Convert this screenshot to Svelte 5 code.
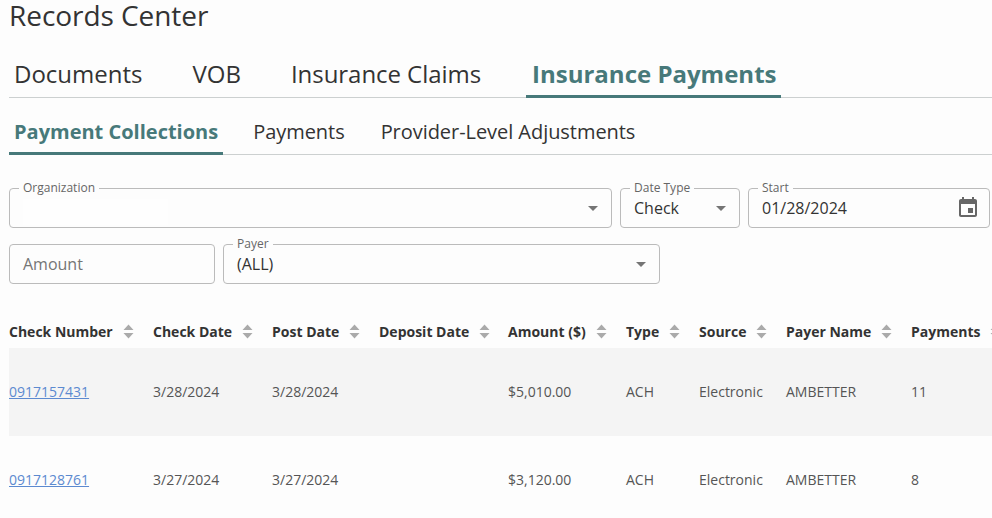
<script>
  const columns = [
    { label: 'Check Number', width: 144 },
    { label: 'Check Date', width: 119 },
    { label: 'Post Date', width: 107 },
    { label: 'Deposit Date', width: 129 },
    { label: 'Amount ($)', width: 118 },
    { label: 'Type', width: 73 },
    { label: 'Source', width: 87 },
    { label: 'Payer Name', width: 125 },
    { label: 'Payments', width: 100 }
  ];
  const rows = [
    ['0917157431', '3/28/2024', '3/28/2024', '', '$5,010.00', 'ACH', 'Electronic', 'AMBETTER', '11'],
    ['0917128761', '3/27/2024', '3/27/2024', '', '$3,120.00', 'ACH', 'Electronic', 'AMBETTER', '8']
  ];
  const template = columns.map((c) => c.width + 'px').join(' ');
</script>

<div class="page">
  <h1>Records Center</h1>

  <nav class="tabs main">
    <span class="tab t-doc">Documents</span>
    <span class="tab t-vob">VOB</span>
    <span class="tab t-claims">Insurance Claims</span>
    <span class="tab active t-pay">Insurance Payments</span>
  </nav>

  <nav class="tabs sub">
    <span class="tab active s-coll">Payment Collections</span>
    <span class="tab s-pay">Payments</span>
    <span class="tab s-adj">Provider-Level Adjustments</span>
  </nav>

  <div class="filters">
    <div class="row">
      <div class="field org">
        <span class="legend">Organization</span>
        <span class="redacted"></span>
        <svg class="arrow" viewBox="0 0 24 24"><path d="M7 10l5 5 5-5z" /></svg>
      </div>
      <div class="field datetype">
        <span class="legend">Date Type</span>
        <span class="value">Check</span>
        <svg class="arrow" viewBox="0 0 24 24"><path d="M7 10l5 5 5-5z" /></svg>
      </div>
      <div class="field start">
        <span class="legend">Start</span>
        <span class="value">01/28/2024</span>
        <svg class="cal" viewBox="0 0 24 24"><path d="M17 12h-5v5h5v-5zM16 1v2H8V1H6v2H5c-1.11 0-1.99.9-1.99 2L3 19c0 1.1.89 2 2 2h14c1.1 0 2-.9 2-2V5c0-1.1-.9-2-2-2h-1V1h-2zm3 18H5V8h14v11z" /></svg>
      </div>
    </div>
    <div class="row">
      <div class="field amount"><span class="placeholder">Amount</span></div>
      <div class="field payer">
        <span class="legend">Payer</span>
        <span class="value">(ALL)</span>
        <svg class="arrow" viewBox="0 0 24 24"><path d="M7 10l5 5 5-5z" /></svg>
      </div>
    </div>
  </div>

  <div class="table">
    <div class="thead" style="grid-template-columns: {template}">
      {#each columns as c}
        <div class="th">
          <span>{c.label}</span>
          <svg class="sort" viewBox="0 0 11 15"><path d="M5.5 .6 10.5 6H.5zM5.5 14.4 10.5 9H.5z" /></svg>
        </div>
      {/each}
    </div>
    {#each rows as r, i}
      <div class="tr" class:odd={i === 0} style="grid-template-columns: {template}">
        {#each r as cell, j}
          <div class="td">
            {#if j === 0}<a href="#top">{cell}</a>{:else}{cell}{/if}
          </div>
        {/each}
      </div>
    {/each}
  </div>
</div>

<style>
  :global(body) {
    margin: 0;
    background: #fdfdfd;
    overflow: hidden;
  }
  .page {
    width: 992px;
    height: 518px;
    overflow: hidden;
    padding-left: 9px;
    box-sizing: border-box;
    font-family: "Open Sans", sans-serif;
    color: #333;
  }
  h1 {
    margin: 0 0 24px;
    font-size: 28px;
    font-weight: 400;
    line-height: 30px;
    height: 30px;
    letter-spacing: -0.06px;
    color: #333;
  }
  .tabs {
    display: flex;
    white-space: nowrap;
    border-bottom: 1px solid #ccd0d0;
    box-sizing: border-box;
  }
  .main {
    height: 44px;
    font-size: 24px;
    line-height: 40px;
  }
  .sub {
    height: 57px;
    padding-top: 20px;
    font-size: 20px;
    line-height: 28px;
  }
  .tab {
    padding: 0 5px;
    height: 100%;
    box-sizing: border-box;
    color: #333;
  }
  .t-doc { margin-right: 40px; }
  .t-vob { margin-right: 40px; }
  .t-claims { margin-right: 40px; letter-spacing: -0.05px; }
  .t-pay { padding: 0 5px 0 6px; }
  .s-coll { margin-right: 25px; }
  .s-pay { margin-right: 26px; letter-spacing: -0.05px; }
  .s-adj { letter-spacing: -0.05px; }
  .tab.active {
    font-weight: 700;
    color: #47797a;
    border-bottom: 3px solid #47797a;
    height: calc(100% + 1px);
  }
  .filters {
    display: flex;
    flex-direction: column;
    gap: 16px;
    margin-top: 33px;
  }
  .row {
    display: flex;
    gap: 8px;
  }
  .field {
    position: relative;
    height: 40px;
    box-sizing: border-box;
    border: 1px solid #bbb;
    border-radius: 4px;
    padding: 0 13px;
    display: flex;
    align-items: center;
    font-size: 16px;
    color: #333;
  }
  .org { width: 603px; }
  .datetype { width: 120px; }
  .start { width: 242px; }
  .amount { width: 206px; }
  .payer { width: 437px; }
  .legend {
    position: absolute;
    top: -9px;
    left: 9px;
    padding: 0 4px;
    font-size: 12px;
    line-height: 16px;
    color: #666;
    background: #fdfdfd;
  }
  .value {
    line-height: 22px;
    margin-top: -1px;
  }
  .placeholder {
    color: #757575;
  }
  .redacted {
    position: absolute;
    left: 13px;
    top: 10px;
    width: 145px;
    height: 26px;
    background: #fefefe;
  }
  .arrow {
    position: absolute;
    right: 6px;
    top: 7px;
    width: 24px;
    height: 24px;
    fill: #757575;
  }
  .cal {
    position: absolute;
    right: 9px;
    top: 7px;
    width: 24px;
    height: 24px;
    fill: #666;
  }
  .table {
    margin-top: 34px;
    width: 983px;
    overflow: hidden;
  }
  .thead, .tr {
    display: grid;
    box-sizing: border-box;
  }
  .thead {
    height: 30px;
    padding-bottom: 3px;
    align-items: center;
    font-size: 14px;
    font-weight: 700;
    color: #333;
  }
  .th {
    display: flex;
    align-items: center;
    gap: 10px;
    white-space: nowrap;
  }
  .sort {
    width: 11px;
    height: 15px;
    fill: #aaa;
    flex: none;
  }
  .tr {
    height: 88px;
    padding-bottom: 2px;
    align-items: center;
    font-size: 14px;
    color: #555;
  }
  .tr.odd {
    background: #f4f4f4;
  }
  a {
    color: #5c8ad0;
    text-decoration: underline;
  }
</style>
